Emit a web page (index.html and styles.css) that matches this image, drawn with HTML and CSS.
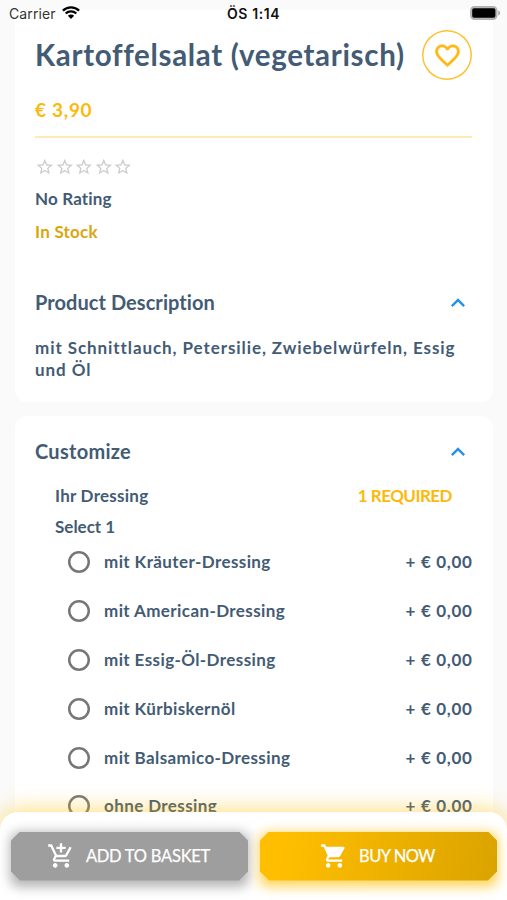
FILE: index.html
```html
<!DOCTYPE html>
<html lang="de">
<head>
<meta charset="utf-8">
<title>Kartoffelsalat (vegetarisch)</title>
<link rel="stylesheet" href="styles.css">
</head>
<body>
<svg class="defs" width="0" height="0">
  <symbol id="star" viewBox="0 0 24 24"><path d="M22 9.24l-7.19-.62L12 2 9.19 8.63 2 9.24l5.46 4.73L5.82 21 12 17.27 18.18 21l-1.63-7.03L22 9.24zM12 15.4l-3.76 2.27 1-4.28-3.32-2.88 4.38-.38L12 6.1l1.71 4.04 4.38.38-3.32 2.88 1 4.28L12 15.4z"/></symbol>
  <symbol id="chevron" viewBox="0 0 24 24"><path d="M12 8l-6 6 1.41 1.41L12 10.83l4.59 4.58L18 14z"/></symbol>
</svg>
<div class="screen">
  <header class="status">
    <span class="carrier">Carrier</span>
    <svg class="wifi" viewBox="0 0 18 13"><path class="arc" d="M.9 4.6a11.7 11.7 0 0 1 16.2 0M3.7 7.5a7.6 7.6 0 0 1 10.6 0"/><path d="M9 12.9L5.9 9.8a4.4 4.4 0 0 1 6.2 0z"/></svg>
    <span class="clock">ÖS 1:14</span>
    <svg class="battery" viewBox="0 0 31 14"><rect class="shell" x=".8" y=".8" width="26" height="12.4" rx="3.6"/><rect x="2.2" y="2.2" width="23.2" height="9.6" rx="1.8"/><path class="tip" d="M28.2 4.4q2 .8 2 2.6t-2 2.6z"/></svg>
  </header>
  <main>
    <section class="card product">
      <div class="title-row">
        <h1>Kartoffelsalat (vegetarisch)</h1>
        <button class="favorite" aria-label="Favorit"><svg viewBox="0 0 24 24"><path d="M16.5 3c-1.74 0-3.41.81-4.5 2.09C10.91 3.81 9.24 3 7.5 3 4.42 3 2 5.42 2 8.5c0 3.78 3.4 6.86 8.55 11.54L12 21.35l1.45-1.32C18.6 15.36 22 12.28 22 8.5 22 5.42 19.58 3 16.5 3zm-4.4 15.55l-.1.1-.1-.1C7.14 14.24 4 11.39 4 8.5 4 6.5 5.5 5 7.5 5c1.54 0 3.04.99 3.57 2.36h1.87C13.46 5.99 14.96 5 16.5 5c2 0 3.5 1.5 3.5 3.5 0 2.89-3.14 5.74-7.9 10.05z"/></svg></button>
      </div>
      <p class="price">€ 3,90</p>
      <div class="stars"><svg><use href="#star"/></svg><svg><use href="#star"/></svg><svg><use href="#star"/></svg><svg><use href="#star"/></svg><svg><use href="#star"/></svg></div>
      <p class="rating">No Rating</p>
      <p class="stock">In Stock</p>
      <div class="heading"><h2>Product Description</h2><svg><use href="#chevron"/></svg></div>
      <p class="description">mit Schnittlauch, Petersilie, Zwiebelwürfeln, Essig<br>und Öl</p>
    </section>
    <section class="card customize">
      <div class="heading"><h2>Customize</h2><svg><use href="#chevron"/></svg></div>
      <div class="group"><h3>Ihr Dressing</h3><span class="required">1 REQUIRED</span></div>
      <p class="select">Select 1</p>
      <ul>
        <li><i class="radio"></i><span class="name">mit Kräuter-Dressing</span><span class="cost">+ € 0,00</span></li>
        <li><i class="radio"></i><span class="name">mit American-Dressing</span><span class="cost">+ € 0,00</span></li>
        <li><i class="radio"></i><span class="name">mit Essig-Öl-Dressing</span><span class="cost">+ € 0,00</span></li>
        <li><i class="radio"></i><span class="name">mit Kürbiskernöl</span><span class="cost">+ € 0,00</span></li>
        <li><i class="radio"></i><span class="name">mit Balsamico-Dressing</span><span class="cost">+ € 0,00</span></li>
        <li><i class="radio"></i><span class="name">ohne Dressing</span><span class="cost">+ € 0,00</span></li>
      </ul>
    </section>
  </main>
  <footer class="actions">
    <button class="action basket"><svg viewBox="0 0 24 24"><path d="M11 9h2V6h3V4h-3V1h-2v3H8v2h3v3zm-4 9c-1.1 0-1.99.9-1.99 2S5.9 22 7 22s2-.9 2-2-.9-2-2-2zm10 0c-1.1 0-1.99.9-1.99 2s.89 2 1.99 2 2-.9 2-2-.9-2-2-2zm-9.83-3.25l.03-.12.9-1.63h7.45c.75 0 1.41-.41 1.75-1.03l3.86-7.01L19.42 4h-.01l-1.1 2-2.76 5H8.53l-.13-.27L6.16 6l-.95-2-.94-2H1v2h2l3.6 7.59-1.35 2.45c-.16.28-.25.61-.25.96 0 1.1.9 2 2 2h12v-2H7.42c-.13 0-.25-.11-.25-.25z"/></svg><span>ADD TO BASKET</span></button>
    <button class="action buy"><svg viewBox="0 0 24 24"><path d="M7 18c-1.1 0-1.99.9-1.99 2S5.9 22 7 22s2-.9 2-2-.9-2-2-2zM1 2v2h2l3.6 7.59-1.35 2.45c-.16.28-.25.61-.25.96 0 1.1.9 2 2 2h12v-2H7.42c-.14 0-.25-.11-.25-.25l.03-.12.9-1.63h7.45c.75 0 1.41-.41 1.75-1.03l3.58-6.49c.08-.14.12-.31.12-.48 0-.55-.45-1-1-1H5.21l-.94-2H1zm16 16c-1.1 0-1.99.9-1.99 2s.89 2 1.99 2 2-.9 2-2-.9-2-2-2z"/></svg><span>BUY NOW</span></button>
  </footer>
</div>
</body>
</html>
```
FILE: styles.css
```css
* { box-sizing: border-box; margin: 0; padding: 0; }
body { background: #fafafa; font-family: Lato, "Open Sans", sans-serif; font-weight: 700; color: #435b74; font-variant-ligatures: none; }
button { font: inherit; border: 0; background: none; }
.defs { position: absolute; }
.screen { position: relative; width: 507px; height: 900px; overflow: hidden; }
.status { position: absolute; z-index: 2; top: 0; left: 0; width: 100%; height: 27px; padding: 0 7px 0 9px; display: flex; align-items: center; font-family: Inter, sans-serif; font-size: 14px; color: #111; }
.carrier { font-weight: 400; letter-spacing: .1px; color: #333; width: 53px; }
.wifi { width: 18px; height: 13px; margin-top: -2px; }
.wifi .arc { fill: none; stroke: #000; stroke-width: 2.3; }
.clock { font-weight: 600; margin-left: 147px; letter-spacing: .6px; }
.battery { width: 31px; height: 14px; margin-left: auto; margin-top: -1px; margin-right: -1px; }
.shell { fill: #bbb; stroke: #b0b0b0; stroke-width: 1.4; }
.tip { fill: #aaa; }
main { padding: 10px 14px 0 15px; }
.card { background: #fff; border-radius: 12px; padding: 0 21px 0 20px; }
.product { height: 392px; padding-top: 20px; border-radius: 0 0 12px 12px; }
.title-row { display: flex; justify-content: space-between; align-items: center; height: 50px; }
h1 { font-size: 29.5px; line-height: 36px; letter-spacing: .68px; white-space: nowrap; }
.favorite { width: 50px; height: 50px; display: flex; align-items: center; justify-content: center; flex: none; border-radius: 50%; box-shadow: inset 0 0 0 1.5px #fdc233; }
.favorite svg { width: 29px; height: 29px; fill: #fdb813; stroke: #fdb813; stroke-width: .4; }
.price { height: 58px; border-bottom: 2px solid #feeab3; padding-top: 18px; font-size: 19px; line-height: 24px; letter-spacing: .7px; color: #fdb90b; }
.stars { display: flex; height: 20px; margin-top: 19px; }
.stars svg { width: 19.6px; height: 20px; fill: #ccc; }
.rating, .stock { font-size: 17px; line-height: 22px; letter-spacing: .15px; }
.rating { margin-top: 11px; }
.stock { margin-top: 11px; letter-spacing: .25px; color: #dba50c; }
.heading { display: flex; justify-content: space-between; align-items: center; height: 28px; }
.heading svg { width: 28px; height: 28px; fill: #2491ea; }
h2 { font-size: 20px; line-height: 26px; letter-spacing: .06px; margin-top: -2px; }
.customize h2 { letter-spacing: .28px; }
.product .heading { margin-top: 46px; }
.description { margin-top: 20px; font-size: 17px; line-height: 22px; letter-spacing: .92px; white-space: nowrap; }
.customize { margin-top: 14px; height: 500px; padding-top: 22px; }
.group { display: flex; justify-content: space-between; margin-top: 19px; padding: 0 20px; font-size: 17px; line-height: 22px; }
h3 { font-size: 17px; line-height: 22px; letter-spacing: .25px; }
.required { color: #fdb90b; letter-spacing: -.53px; }
.select { margin: 9px 0 0 20px; font-size: 17px; line-height: 22px; }
ul { list-style: none; margin-top: -1px; }
li { display: flex; align-items: center; height: 48.9px; padding-left: 33px; font-size: 17px; }
.radio { width: 22px; height: 22px; border-radius: 50%; box-shadow: inset 0 0 0 2.5px #767676; margin: 1px 14px 0 0; }
.name { letter-spacing: .4px; }
.cost { margin-left: auto; letter-spacing: .7px; margin-right: -.7px; }
.actions { position: absolute; z-index: 1; left: 0; right: 0; top: 812px; height: 88px; background: #fff; border-radius: 18px 18px 0 0; box-shadow: 0 -3px 22px rgba(255,188,0,.48); display: flex; gap: 12px; padding: 19.5px 10px 19.5px 11px; }
.action { position: relative; flex: 1; display: flex; align-items: center; justify-content: center; gap: 11px; color: #fff; font-weight: 400; font-size: 16.5px; letter-spacing: -.25px; isolation: isolate; }
.action::before, .action::after { content: ""; position: absolute; inset: 0; }
.action::before { z-index: -1; clip-path: polygon(9px 0, calc(100% - 9px) 0, 100% 9px, 100% calc(100% - 9px), calc(100% - 9px) 100%, 9px 100%, 0 calc(100% - 9px), 0 9px); }
.action::after { z-index: -2; inset: 0 -1px -6px; border-radius: 9px; filter: blur(6px); }
.action svg { width: 28px; height: 28px; fill: #fff; margin-left: -2px; margin-top: -1px; }
.action span { -webkit-text-stroke: .25px #fff; margin-top: -1px; }
.basket::before { background: #9e9e9e; }
.basket::after { background: #b4b4b4; }
.buy { letter-spacing: -.5px; }
.buy::before { background: linear-gradient(100deg, #ffbe00 10%, #dba300 100%); }
.buy::after { background: #ffd661; }
```
